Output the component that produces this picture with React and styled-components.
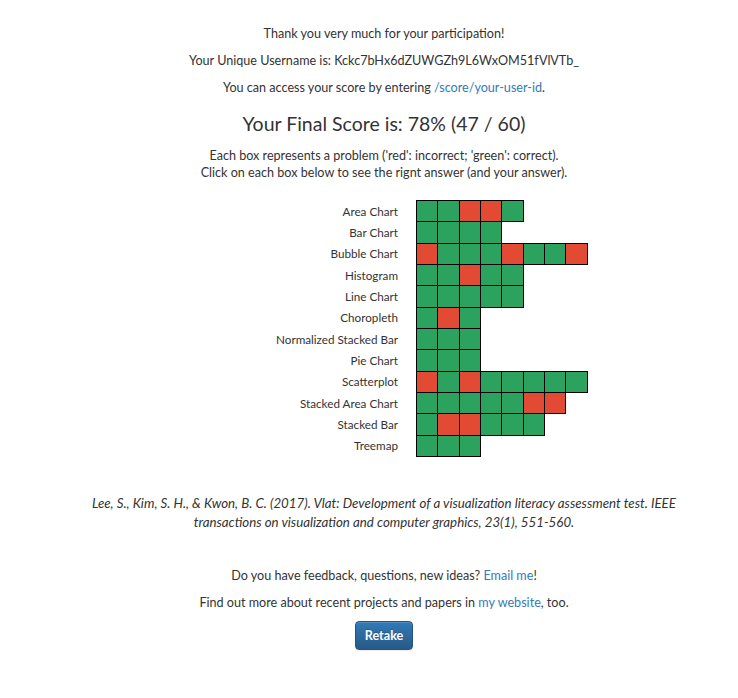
import React from "react";
import styled, { createGlobalStyle } from "styled-components";

const Global = createGlobalStyle`
  html, body { margin: 0; padding: 0; background: #fff; }
  body {
    font-family: Lato, "Liberation Sans", sans-serif;
    font-size: 12.6px;
    line-height: 17px;
    color: #333;
  }
`;

const Page = styled.div`
  padding: 25px 0 40px 30px;
  box-sizing: border-box;
  width: 738px;
  text-align: center;
`;

const P = styled.p`
  margin: 0 0 10px;
`;

const A = styled.a`
  color: #337ab7;
  text-decoration: none;
`;

const Title = styled.h2`
  font-size: 19.5px;
  font-weight: 400;
  line-height: 24px;
  margin: 16px 0 11px;
  color: #333;
`;

const Intro = styled.p`
  margin: 0 0 19px;
`;

const GridWrap = styled.div`
  display: flex;
  justify-content: center;
`;

const Grid = styled.div`
  width: 360px;
  display: flex;
  flex-direction: column;
  padding-top: 1px;
`;

const Row = styled.div`
  display: flex;
  align-items: center;
  margin-top: -1px;
`;

const Label = styled.div`
  width: 212px;
  box-sizing: border-box;
  flex: none;
  text-align: right;
  padding-right: 18px;
  font-size: 11.7px;
`;

const Cells = styled.div`
  display: flex;
`;

const Cell = styled.div`
  width: 22.33px;
  height: 22.33px;
  box-sizing: border-box;
  border: 1px solid #000;
  margin-left: -1px;
  background: ${(p) => (p.$ok ? "#2ca25f" : "#e34a33")};
  cursor: pointer;
  &:first-child { margin-left: 0; }
`;

const Cite = styled.p`
  font-style: italic;
  font-size: 13.3px;
  line-height: 19px;
  margin: 37px auto 35px;
  max-width: 600px;
`;

const Button = styled.button`
  font-family: inherit;
  font-size: 12.6px;
  line-height: 17px;
  font-weight: 700;
  color: #fff;
  padding: 5px 9px;
  border: 1px solid #245580;
  border-radius: 4px;
  background-image: linear-gradient(to bottom, #337ab7 0, #265a88 100%);
  box-shadow: inset 0 1px 0 rgba(255,255,255,.15), 0 1px 1px rgba(0,0,0,.075);
  text-shadow: 0 -1px 0 rgba(0,0,0,.2);
  cursor: pointer;
  margin-top: 0;
`;

const rows = [
  ["Area Chart", "GGRRG"],
  ["Bar Chart", "GGGG"],
  ["Bubble Chart", "RGGGRGGR"],
  ["Histogram", "GGRGG"],
  ["Line Chart", "GGGGG"],
  ["Choropleth", "GRG"],
  ["Normalized Stacked Bar", "GGG"],
  ["Pie Chart", "GGG"],
  ["Scatterplot", "RGRGGGGG"],
  ["Stacked Area Chart", "GGGGGRR"],
  ["Stacked Bar", "GRRGGG"],
  ["Treemap", "GGG"],
];

export default function App() {
  return (
    <>
      <Global />
      <Page>
        <P>Thank you very much for your participation!</P>
        <P>Your Unique Username is: Kckc7bHx6dZUWGZh9L6WxOM51fVlVTb_</P>
        <P>
          You can access your score by entering <A href="#">/score/your-user-id</A>.
        </P>
        <Title>Your Final Score is: 78% (47 / 60)</Title>
        <Intro>
          Each box represents a problem ('red': incorrect; 'green': correct).
          <br />
          Click on each box below to see the rignt answer (and your answer).
        </Intro>
        <GridWrap>
          <Grid>
            {rows.map(([name, cells]) => (
              <Row key={name}>
                <Label>{name}</Label>
                <Cells>
                  {cells.split("").map((c, i) => (
                    <Cell key={i} $ok={c === "G"} />
                  ))}
                </Cells>
              </Row>
            ))}
          </Grid>
        </GridWrap>
        <Cite>
          Lee, S., Kim, S. H., &amp; Kwon, B. C. (2017). Vlat: Development of a visualization literacy assessment test. IEEE transactions on visualization and computer graphics, 23(1), 551-560.
        </Cite>
        <P>
          Do you have feedback, questions, new ideas? <A href="#">Email me</A>!
        </P>
        <P>
          Find out more about recent projects and papers in <A href="#">my website</A>, too.
        </P>
        <Button>Retake</Button>
      </Page>
    </>
  );
}
